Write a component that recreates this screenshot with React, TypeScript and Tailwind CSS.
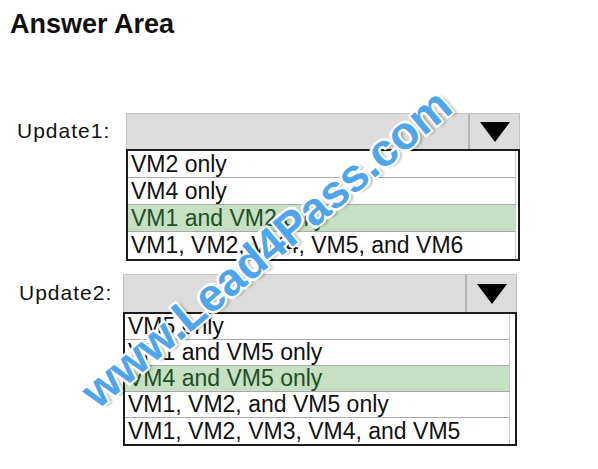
type DropdownProps = {
  options: string[]
  selected: number
  rowClass: string
  rowInset: string
  headerH: string
}

function Dropdown({ options, selected, rowClass, rowInset, headerH }: DropdownProps) {
  return (
    <div className="flex flex-col w-[394px]">
      {/* closed select header */}
      <div className={`flex ${headerH} bg-[#dcdcdc] border border-[#c4c4c4]`}>
        <div className="flex-1" />
        <div className="w-[51px] border-l-2 border-[#b3b3b3] flex items-center justify-center">
          <svg width="32" height="22" viewBox="0 0 32 22">
            <polygon points="1,1 31,1 16,21" fill="#000" />
          </svg>
        </div>
      </div>

      {/* open options list */}
      <div className="border-2 border-[#1c1c1c] bg-white -mt-px">
        {options.map((opt, i) => (
          <div
            key={opt}
            className={`${rowClass} ${rowInset} flex items-center px-[3px] text-[23px] leading-none ${
              i < options.length - 1 ? 'border-b border-[#a9a9a9]' : ''
            } ${i === selected ? 'bg-[#c5e0c3] text-[#214f24]' : 'text-[#111]'}`}
          >
            {opt}
          </div>
        ))}
      </div>
    </div>
  )
}

export default function App() {
  return (
    <div className="relative w-[598px] h-[469px] overflow-hidden bg-white font-['Liberation_Sans',Arial,sans-serif] text-[#111]">
      <h1 className="pl-[10px] pt-[9px] text-[27px] leading-[31px] font-bold">Answer Area</h1>

      <div className="mt-[73px] flex flex-col gap-[13px]">
        {/* Update1 */}
        <div className="flex items-start pl-[17px]">
          <div className="w-[109px] h-[37px] flex items-center pb-[2px] text-[21px] tracking-[1px]">Update1:</div>
          <Dropdown
            options={['VM2 only', 'VM4 only', 'VM1 and VM2 only', 'VM1, VM2, VM4, VM5, and VM6']}
            selected={2}
            rowClass="h-[27px]"
            rowInset="mr-[2px] border-r border-r-[#c8c8c8]"
            headerH="h-[37px]"
          />
        </div>

        {/* Update2 */}
        <div className="flex items-start pl-[19px]">
          <div className="w-[104px] h-[39px] flex items-center pb-[2px] text-[21px] tracking-[1px]">Update2:</div>
          <Dropdown
            options={[
              'VM5 only',
              'VM1 and VM5 only',
              'VM4 and VM5 only',
              'VM1, VM2, and VM5 only',
              'VM1, VM2, VM3, VM4, and VM5',
            ]}
            selected={2}
            rowClass="h-[26px]"
            rowInset="mr-[5px] border-r border-r-[#c8c8c8]"
            headerH="h-[39px]"
          />
        </div>
      </div>

      {/* site watermark */}
      <span className="absolute left-[266px] top-[248px] -translate-x-1/2 -translate-y-1/2 -rotate-[40deg] whitespace-nowrap text-[46px] leading-none font-bold text-[#4ea5ea] [text-shadow:2px_0_0_#fff,-2px_0_0_#fff,0_2px_0_#fff,0_-2px_0_#fff,2px_2px_0_#fff,-2px_-2px_0_#fff,2px_-2px_0_#fff,-2px_2px_0_#fff,3px_3px_3px_rgba(0,0,0,0.35)]">
        www.Lead4Pass.com
      </span>
    </div>
  )
}
